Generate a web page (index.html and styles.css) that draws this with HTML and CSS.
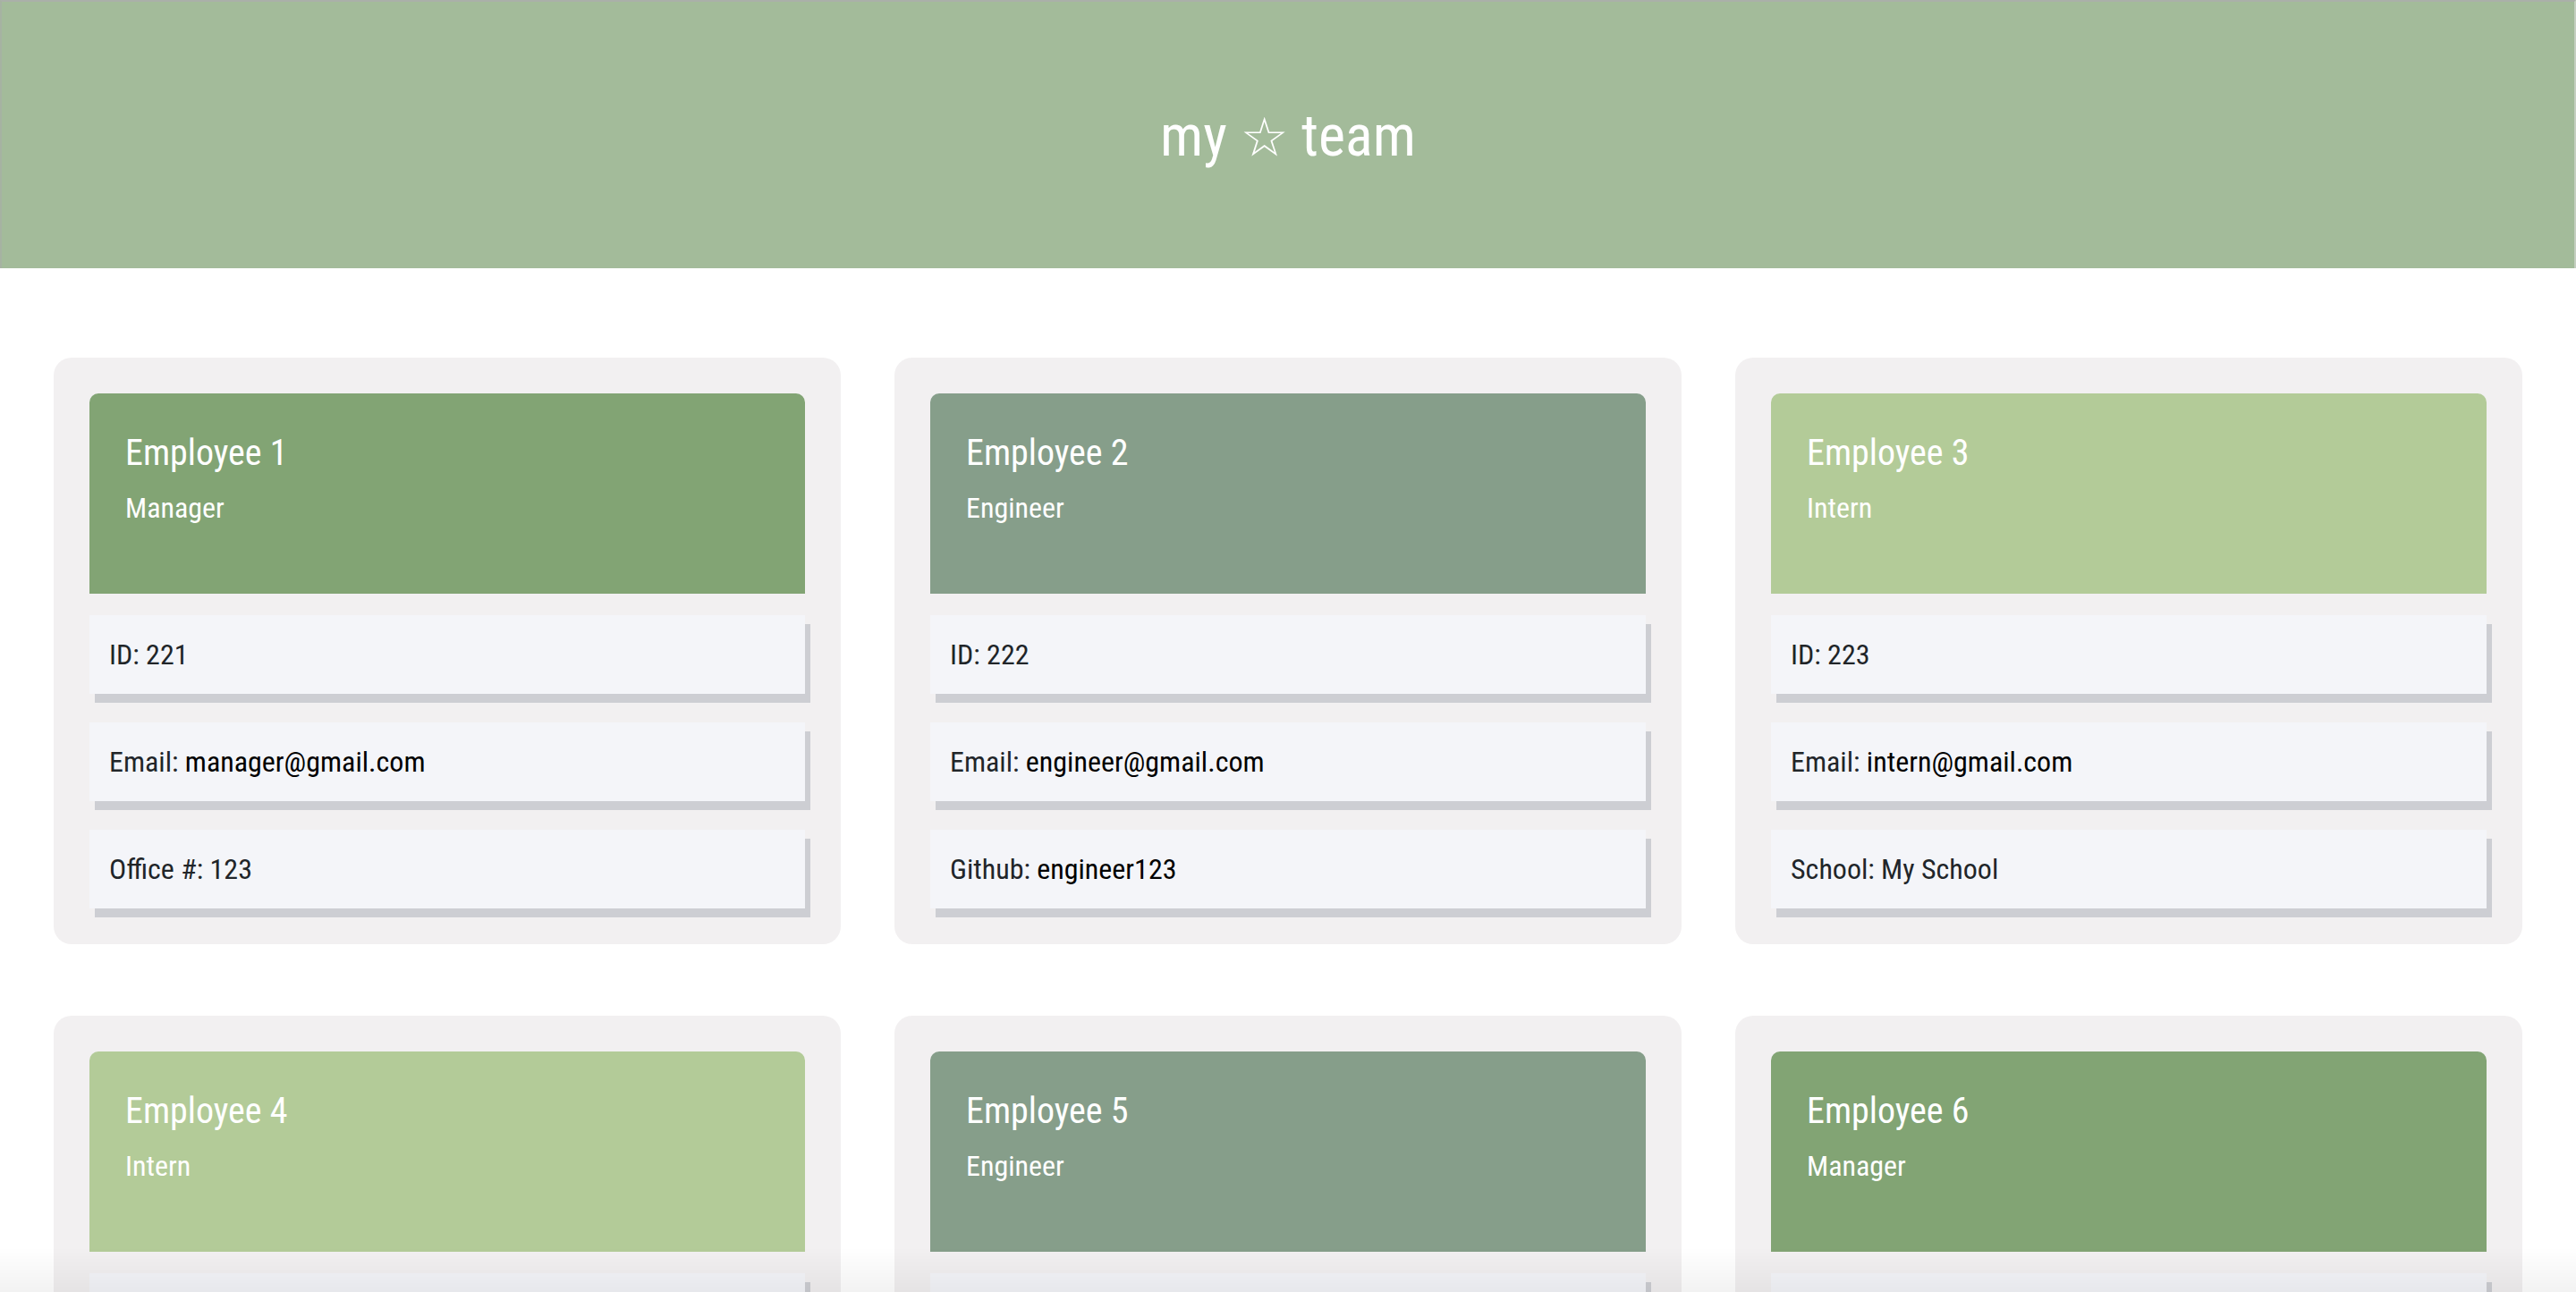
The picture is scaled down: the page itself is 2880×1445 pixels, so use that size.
FILE: index.html
```html
<!DOCTYPE html>
<html lang="en">
<head>
<meta charset="utf-8">
<title>My Team</title>
<link rel="stylesheet" href="styles.css">
</head>
<body>
<header class="banner">
  <h1 class="banner-title">my <span class="star">☆</span> team</h1>
</header>
<main class="team">
  <section class="card">
    <div class="card-head manager">
      <h2 class="card-name">Employee 1</h2>
      <p class="card-role">Manager</p>
    </div>
    <ul class="details">
      <li class="detail">ID: 221</li>
      <li class="detail">Email: <a class="detail-link" href="#">manager@gmail.com</a></li>
      <li class="detail">Office #: 123</li>
    </ul>
  </section>
  <section class="card">
    <div class="card-head engineer">
      <h2 class="card-name">Employee 2</h2>
      <p class="card-role">Engineer</p>
    </div>
    <ul class="details">
      <li class="detail">ID: 222</li>
      <li class="detail">Email: <a class="detail-link" href="#">engineer@gmail.com</a></li>
      <li class="detail">Github: <a class="detail-link" href="#">engineer123</a></li>
    </ul>
  </section>
  <section class="card">
    <div class="card-head intern">
      <h2 class="card-name">Employee 3</h2>
      <p class="card-role">Intern</p>
    </div>
    <ul class="details">
      <li class="detail">ID: 223</li>
      <li class="detail">Email: <a class="detail-link" href="#">intern@gmail.com</a></li>
      <li class="detail">School: My School</li>
    </ul>
  </section>
  <section class="card">
    <div class="card-head intern">
      <h2 class="card-name">Employee 4</h2>
      <p class="card-role">Intern</p>
    </div>
    <ul class="details">
      <li class="detail">ID: 224</li>
      <li class="detail">Email: <a class="detail-link" href="#">intern2@gmail.com</a></li>
      <li class="detail">School: My School</li>
    </ul>
  </section>
  <section class="card">
    <div class="card-head engineer">
      <h2 class="card-name">Employee 5</h2>
      <p class="card-role">Engineer</p>
    </div>
    <ul class="details">
      <li class="detail">ID: 225</li>
      <li class="detail">Email: <a class="detail-link" href="#">engineer2@gmail.com</a></li>
      <li class="detail">Github: <a class="detail-link" href="#">engineer456</a></li>
    </ul>
  </section>
  <section class="card">
    <div class="card-head manager">
      <h2 class="card-name">Employee 6</h2>
      <p class="card-role">Manager</p>
    </div>
    <ul class="details">
      <li class="detail">ID: 226</li>
      <li class="detail">Email: <a class="detail-link" href="#">manager2@gmail.com</a></li>
      <li class="detail">Office #: 456</li>
    </ul>
  </section>
</main>
<div class="bottom-fade"></div>
</body>
</html>
```
FILE: styles.css
```css
* {
  box-sizing: border-box;
}

body {
  margin: 0;
  background: #ffffff;
  font-family: "Roboto Condensed", "Liberation Sans Narrow", "DejaVu Sans", sans-serif;
  font-stretch: condensed;
  font-weight: 400;
  color: #212529;
}

.banner {
  height: 300px;
  background: #a3bb9a;
  border-top: 2px solid #aab0a9;
  border-left: 2px solid #a6b2a2;
  border-right: 2px solid #c4cfc0;
  display: flex;
  align-items: center;
  justify-content: center;
}

.banner-title {
  margin: 4px 0 0 0;
  font-size: 64px;
  font-weight: 400;
  color: #ffffff;
  line-height: 1.2;
}

.star {
  font-family: "DejaVu Sans", sans-serif;
  font-stretch: normal;
  font-weight: 400;
  font-size: 60px;
}

.team {
  display: grid;
  grid-template-columns: repeat(3, 1fr);
  column-gap: 60px;
  row-gap: 80px;
  padding: 100px 60px 80px;
}

.card {
  background: #f2f0f1;
  border-radius: 20px;
  padding: 40px 40px 40px;
}

.card-head {
  border-radius: 10px 10px 0 0;
  padding: 43px 40px 0;
  height: 224px;
  color: #ffffff;
}

.manager {
  background: #82a474;
}

.engineer {
  background: #869e8a;
}

.intern {
  background: #b3cb98;
}

.card-name {
  margin: 0;
  font-size: 40px;
  font-weight: 400;
  line-height: 48px;
}

.card-role {
  margin: 18px 0 0;
  font-size: 32px;
  line-height: 38px;
}

.details {
  list-style: none;
  margin: 24px 0 0;
  padding: 0;
  display: flex;
  flex-direction: column;
  gap: 32px;
}

.detail {
  background: #f4f5f9;
  padding: 20px 22px;
  font-size: 32px;
  line-height: 48px;
  color: #212529;
  box-shadow: 6px 10px 0 0 #cdced3;
}

.detail-link {
  color: #000000;
  text-decoration: none;
}

.bottom-fade {
  position: fixed;
  left: 0;
  right: 0;
  bottom: 0;
  height: 50px;
  background: linear-gradient(to bottom, rgba(0, 0, 0, 0), rgba(0, 0, 0, 0.05));
  pointer-events: none;
}
```
